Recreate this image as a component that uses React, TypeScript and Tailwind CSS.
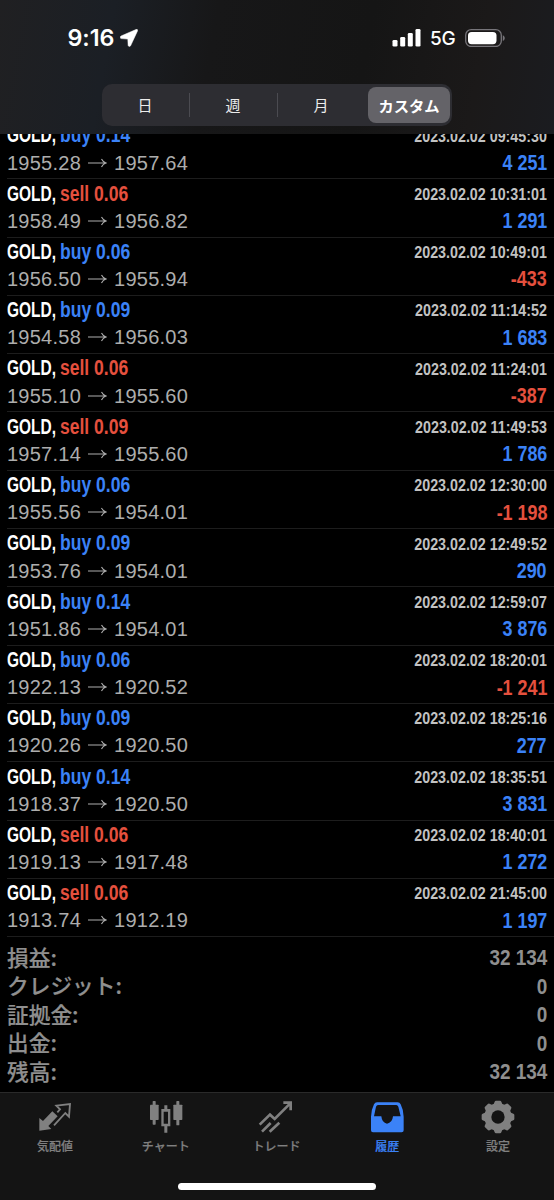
import React from 'react';

type Deal = {
  side: 'buy' | 'sell';
  lot: string;
  open: string;
  close: string;
  time: string;
  profit: string;
};

const deals: Deal[] = [
  { side: 'buy', lot: '0.14', open: '1955.28', close: '1957.64', time: '2023.02.02 09:45:30', profit: '4 251' },
  { side: 'sell', lot: '0.06', open: '1958.49', close: '1956.82', time: '2023.02.02 10:31:01', profit: '1 291' },
  { side: 'buy', lot: '0.06', open: '1956.50', close: '1955.94', time: '2023.02.02 10:49:01', profit: '-433' },
  { side: 'buy', lot: '0.09', open: '1954.58', close: '1956.03', time: '2023.02.02 11:14:52', profit: '1 683' },
  { side: 'sell', lot: '0.06', open: '1955.10', close: '1955.60', time: '2023.02.02 11:24:01', profit: '-387' },
  { side: 'sell', lot: '0.09', open: '1957.14', close: '1955.60', time: '2023.02.02 11:49:53', profit: '1 786' },
  { side: 'buy', lot: '0.06', open: '1955.56', close: '1954.01', time: '2023.02.02 12:30:00', profit: '-1 198' },
  { side: 'buy', lot: '0.09', open: '1953.76', close: '1954.01', time: '2023.02.02 12:49:52', profit: '290' },
  { side: 'buy', lot: '0.14', open: '1951.86', close: '1954.01', time: '2023.02.02 12:59:07', profit: '3 876' },
  { side: 'buy', lot: '0.06', open: '1922.13', close: '1920.52', time: '2023.02.02 18:20:01', profit: '-1 241' },
  { side: 'buy', lot: '0.09', open: '1920.26', close: '1920.50', time: '2023.02.02 18:25:16', profit: '277' },
  { side: 'buy', lot: '0.14', open: '1918.37', close: '1920.50', time: '2023.02.02 18:35:51', profit: '3 831' },
  { side: 'sell', lot: '0.06', open: '1919.13', close: '1917.48', time: '2023.02.02 18:40:01', profit: '1 272' },
  { side: 'sell', lot: '0.06', open: '1913.74', close: '1912.19', time: '2023.02.02 21:45:00', profit: '1 197' },
];

const summary = [
  { label: '損益:', value: '32 134' },
  { label: 'クレジット:', value: '0' },
  { label: '証拠金:', value: '0' },
  { label: '出金:', value: '0' },
  { label: '残高:', value: '32 134' },
];

const StatusBar = () => (
  <div className="flex h-[76px] items-center justify-between pl-[67.5px] pr-[48px] text-white font-['Inter',sans-serif]">
    <div className="flex items-center">
      <span className="w-[52px] text-[23.3px] leading-none font-semibold tracking-[-0.1px]">9:16</span>
      <svg width="18" height="18" viewBox="0 0 18 18" fill="currentColor" stroke="currentColor" strokeWidth="0.500">
        <path d="M16 .5 1 7C-.1 7.600.1 9.500 1.400 9.600L7.800 10.100 8.100 16.300C8.300 17.700 10 17.800 10.600 16.800L17.500 1.900C18 .8 17.200 0 16 .5Z" />
      </svg>
    </div>
    <div className="flex items-center">
      <svg width="29" height="18" viewBox="0 0 29 18" fill="currentColor">
        <rect x="0.500" y="11" width="5" height="6.500" rx="1.300" />
        <rect x="8.200" y="8" width="5" height="9.500" rx="1.300" />
        <rect x="15.800" y="4" width="5" height="13.500" rx="1.300" />
        <rect x="23.500" y="0" width="5" height="17.500" rx="1.300" />
      </svg>
      <span className="ml-[9px] w-[26px] text-[19px] leading-none font-medium tracking-[-0.2px]">5G</span>
      <svg className="ml-[9px]" width="41" height="18" viewBox="0 0 41 18">
        <rect x="0.700" y="0.700" width="35.600" height="16.800" rx="5.500" fill="none" stroke="#77757a" strokeWidth="1.300" />
        <rect x="3" y="3" width="28.500" height="12.200" rx="3.600" fill="#fff" />
        <path d="M37.800 6.200C40.400 7.200 40.400 11 37.800 12Z" fill="#77757a" />
      </svg>
    </div>
  </div>
);

const Segments = () => (
  <div className="mx-[102px] mt-2 flex h-[42px] items-center rounded-[10px] bg-[#2d2d32] text-[15px] text-[#ececec] font-['Noto_Sans_CJK_JP',sans-serif]">
    <div className="flex w-[86px] justify-center">日</div>
    <div className="ml-px h-6 w-px bg-[#4b4b51]" />
    <div className="flex w-[86px] justify-center">週</div>
    <div className="ml-px h-6 w-px bg-[#4b4b51]" />
    <div className="flex w-[86px] justify-center">月</div>
    <div className="ml-[4px] flex h-9 w-[82px] items-center justify-center rounded-[8px] bg-[#646368] text-[15.300px] font-bold text-white">カスタム</div>
  </div>
);

const DealRow = ({ deal }: { deal: Deal }) => {
  const sideColor = deal.side === 'buy' ? 'text-[#3b82f7]' : 'text-[#e5503e]';
  const profitColor = deal.profit.startsWith('-') ? 'text-[#e5503e]' : 'text-[#3b82f7]';

  return (
    <div className="ml-[7px] h-[58.3px] shrink-0 border-b border-[#1d1d1d] pr-[7px] font-['Liberation_Sans',sans-serif] whitespace-nowrap">
      <div className="flex h-[28px] items-center justify-between pt-[2px] text-[21.500px] leading-none font-bold">
        <div className="flex">
          <span className="w-[53px] origin-left scale-x-[0.720] text-white">GOLD,</span>
          <span className={`origin-left scale-x-[0.815] ${sideColor}`}>{deal.side} {deal.lot}</span>
        </div>
        <span className="origin-right scale-x-[0.840] text-[17px] text-[#c2c2c2]">{deal.time}</span>
      </div>
      <div className="flex h-[27px] items-center justify-between leading-none">
        <div className="flex items-center text-[20px] tracking-[0.250px] text-[#adadad]">
          <span>{deal.open}</span>
          <svg className="mx-[7px]" width="19" height="10" viewBox="0 0 19 10" fill="none" stroke="currentColor" strokeWidth="1.100">
            <path d="M0 5H18M13.500 1C14.500 3 16 4.400 18 5C16 5.600 14.500 7 13.500 9" />
          </svg>
          <span>{deal.close}</span>
        </div>
        <span className={`origin-right scale-x-[0.840] pt-[2px] text-[21.300px] font-bold ${profitColor}`}>{deal.profit}</span>
      </div>
    </div>
  );
};

const QuotesIcon = () => (
  <svg width="36" height="36" viewBox="112 56 108 108">
    <path d="M119 113 130 122 158 93 174 108 146 137 155 146 119 151Z" fill="currentColor" />
    <path d="M173 96 181 87 170 76 211 71 208 109 197 98 163 135" fill="none" stroke="currentColor" strokeWidth="5.500" />
  </svg>
);

const ChartIcon = () => (
  <svg width="36" height="36" viewBox="444 56 108 108" fill="currentColor">
    <rect x="450" y="73" width="26" height="46" rx="2" />
    <rect x="458" y="62" width="9" height="71" rx="2" />
    <rect x="520" y="73" width="27" height="46" rx="2" />
    <rect x="529" y="62" width="9" height="73" rx="2" />
    <path fillRule="evenodd" d="M484 86H493V75H502V86H511V138H502V157H493V138H484ZM491 94V130H504V94Z" />
  </svg>
);

const TradeIcon = () => (
  <svg width="36" height="36" viewBox="237 56 108 108" fill="none" stroke="currentColor" strokeWidth="8">
    <path d="M242 133 273 103 287 116 333 70M313 67H335V90M249 154 275 128M272 154 301 127" />
  </svg>
);

const HistoryIcon = () => (
  <svg width="36" height="36" viewBox="45 56 108 108" fill="currentColor">
    <path fillRule="evenodd" d="M69 66H131Q137 66 140 72Q149 90 149 109V150Q149 156 143 156H57Q51 156 51 150V109Q51 90 60 72Q63 66 69 66ZM72 74Q68 74 66 79L60 108H82Q84 128 99 130Q115 128 117 108H140L133 79Q131 74 127 74Z" />
  </svg>
);

const SettingsIcon = () => (
  <svg width="36" height="36" viewBox="-54 -54 108 108">
    <g fill="currentColor">
      <circle r="41" />
      {[0, 45, 90, 135, 180, 225, 270, 315].map((a) => (
        <path key={a} d="M-14 -36 -10 -46Q-9 -49 -6 -49H6Q9 -49 10 -46L14 -36Z" transform={`rotate(${a})`} />
      ))}
    </g>
    <circle r="20" fill="#141414" />
  </svg>
);

const tabs = [
  { label: '気配値', icon: <QuotesIcon /> },
  { label: 'チャート', icon: <ChartIcon /> },
  { label: 'トレード', icon: <TradeIcon /> },
  { label: '履歴', icon: <HistoryIcon />, active: true },
  { label: '設定', icon: <SettingsIcon /> },
];

const App: React.FC = () => {
  return (
    <div className="flex h-[1200px] w-[554px] flex-col overflow-hidden bg-black">
      <header className="z-10 h-[134px] shrink-0 bg-linear-[100deg,#202022_0%,#1b1f25_20%,#171718_38%,#151515_65%,#1b1919_85%,#1b1c20_100%]">
        <StatusBar />
        <Segments />
      </header>

      <main className="flex h-[958px] shrink-0 flex-col overflow-hidden">
        <div className="-mt-[13px]">
          {deals.map((deal) => (
            <DealRow key={deal.time} deal={deal} />
          ))}
        </div>
        <div className="mt-[7px] px-[7px] text-[#8f8f8f]">
          {summary.map((row) => (
            <div key={row.label} className="flex h-[28.500px] items-center justify-between leading-none">
              <span className="pb-[4px] text-[21.700px] font-medium font-['Noto_Sans_CJK_JP',sans-serif] [-webkit-text-stroke:0.2px]">{row.label}</span>
              <span className="origin-right scale-x-[0.860] text-[22px] font-bold font-['Liberation_Sans',sans-serif]">{row.value}</span>
            </div>
          ))}
        </div>
      </main>

      <nav className="flex grow flex-col border-t border-[#2a2a2a] bg-[#141414]">
        <div className="-ml-[0.500px] grid w-[554px] grid-cols-5 pt-[6px]">
          {tabs.map((tab) => (
            <div key={tab.label} className={`flex flex-col items-center ${tab.active ? 'text-[#3b82f7]' : 'text-[#808080]'}`}>
              {tab.icon}
              <span className="mt-[4px] text-[12px] leading-[13px] font-medium font-['Noto_Sans_CJK_JP',sans-serif] [-webkit-text-stroke:0.2px]">{tab.label}</span>
            </div>
          ))}
        </div>
        <div className="mx-auto mt-auto mb-[10px] h-[7px] w-[198px] rounded-full bg-white" />
      </nav>
    </div>
  );
};

export default App;
